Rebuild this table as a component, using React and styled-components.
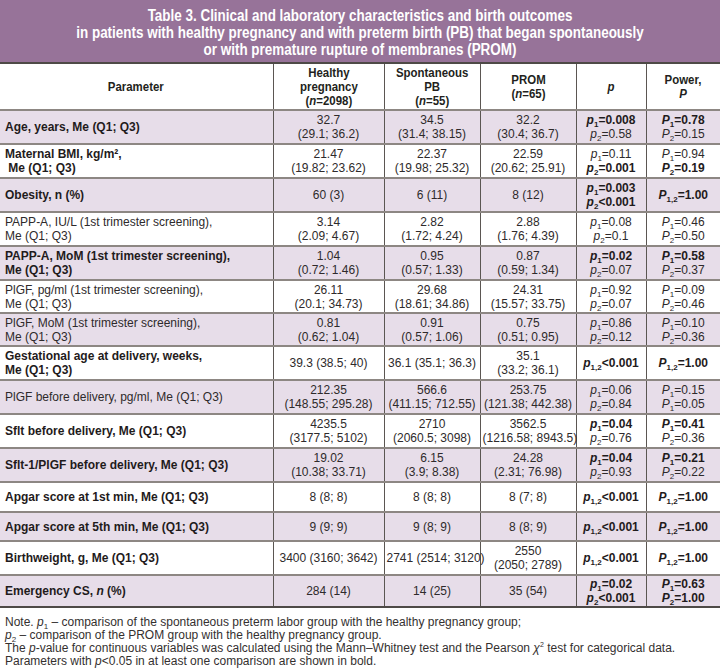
import React from "react";
import styled, { createGlobalStyle } from "styled-components";

const Global = createGlobalStyle`
  html, body { margin: 0; padding: 0; background: #ffffff; }
  body { font-family: "Liberation Sans", Arial, sans-serif; color: #231f20; }
`;

const Page = styled.div`
  width: 720px;
`;

const TitleBar = styled.div`
  background: #977399;
  color: #ffffff;
  font-family: "Liberation Sans", Arial, sans-serif;
  font-weight: bold;
  font-size: 16px;
  line-height: 17px;
  padding: 7px 0 4px;
  border-bottom: 2px solid #4e4a47;
`;

const TitleLine = styled.div`
  text-align: center;
  white-space: nowrap;
  transform: scaleX(0.84);
  transform-origin: center;
`;

const Table = styled.table`
  width: 720px;
  border-collapse: collapse;
  table-layout: fixed;
  border-bottom: 2px solid #4e4a47;
`;

const HeadCell = styled.th`
  font-family: "Liberation Sans", Arial, sans-serif;
  font-weight: bold;
  font-size: 13px;
  line-height: 14px;
  text-align: center;
  vertical-align: middle;
  padding: 0 2px;
  height: 45px;
  color: #231f20;
  border-left: 1px solid #5b5652;
  &:first-child { border-left: none; }
`;

const Narrow = styled.span`
  display: inline-block;
  white-space: nowrap;
  transform: scaleX(0.88);
  transform-origin: center;
`;

const Row = styled.tr`
  background: ${(p) => (p.$shaded ? "#e7dde9" : "#ffffff")};
  border-top: 2px solid #8d8783;
  height: ${(p) => p.$h}px;
`;

const ParamCell = styled.td`
  font-size: 12px;
  line-height: 14px;
  font-weight: ${(p) => (p.$bold ? "bold" : "normal")};
  color: ${(p) => (p.$bold ? "#1f1b1c" : "#2e2a2b")};
  text-align: left;
  vertical-align: middle;
  padding: 0 4px 0 5px;
  white-space: pre;
`;

const Cell = styled.td`
  font-size: 12px;
  line-height: 14px;
  text-align: center;
  vertical-align: middle;
  padding: 0 2px;
  color: #2e2a2b;
  border-left: 1px solid #5b5652;
  white-space: nowrap;
`;

const Line = styled.div`
  font-weight: ${(p) => (p.$bold ? "bold" : "normal")};
  color: ${(p) => (p.$bold ? "#1f1b1c" : "#2e2a2b")};
`;

const Sub = styled.sub`
  font-size: 8px;
  line-height: 0;
  vertical-align: -3px;
`;

const Sup = styled.sup`
  font-size: 7px;
  line-height: 0;
  vertical-align: 5px;
`;

const It = styled.i``;

const Notes = styled.div`
  font-size: 12px;
  line-height: 13px;
  color: #34302f;
  padding: 8px 0 0 5px;
`;

const cols = [273, 111, 96, 96, 70, 74];

const Stat = ({ sym, sub, rest, bold }) => (
  <Line $bold={bold}>
    <It>{sym}</It>
    <Sub>{sub}</Sub>
    {rest}
  </Line>
);

const rows = [
  { param: "Age, years, Me (Q1; Q3)", bold: true, h: ["32.7", "(29.1; 36.2)"], s: ["34.5", "(31.4; 38.15)"], r: ["32.2", "(30.4; 36.7)"],
    p: [["1", "=0.008", true], ["2", "=0.58", false]], P: [["1", "=0.78", true], ["2", "=0.15", false]], height: 34 },
  { param: "Maternal BMI, kg/m²,\n Me (Q1; Q3)", bold: true, h: ["21.47", "(19.82; 23.62)"], s: ["22.37", "(19.98; 25.32)"], r: ["22.59", "(20.62; 25.91)"],
    p: [["1", "=0.11", false], ["2", "=0.001", true]], P: [["1", "=0.94", false], ["2", "=0.19", true]], height: 34 },
  { param: "Obesity, n (%)", bold: true, h: ["60 (3)"], s: ["6 (11)"], r: ["8 (12)"],
    p: [["1", "=0.003", true], ["2", "<0.001", true]], P: [["1,2", "=1.00", true]], height: 34 },
  { param: "PAPP-A, IU/L (1st trimester screening),\nMe (Q1; Q3)", bold: false, h: ["3.14", "(2.09; 4.67)"], s: ["2.82", "(1.72; 4.24)"], r: ["2.88", "(1.76; 4.39)"],
    p: [["1", "=0.08", false], ["2", "=0.1", false]], P: [["1", "=0.46", false], ["2", "=0.50", false]], height: 34 },
  { param: "PAPP-A, MoM (1st trimester screening),\nMe (Q1; Q3)", bold: true, h: ["1.04", "(0.72; 1.46)"], s: ["0.95", "(0.57; 1.33)"], r: ["0.87", "(0.59; 1.34)"],
    p: [["1", "=0.02", true], ["2", "=0.07", false]], P: [["1", "=0.58", true], ["2", "=0.37", false]], height: 34 },
  { param: "PlGF, pg/ml (1st trimester screening),\nMe (Q1; Q3)", bold: false, h: ["26.11", "(20.1; 34.73)"], s: ["29.68", "(18.61; 34.86)"], r: ["24.31", "(15.57; 33.75)"],
    p: [["1", "=0.92", false], ["2", "=0.07", false]], P: [["1", "=0.09", false], ["2", "=0.46", false]], height: 33 },
  { param: "PlGF, MoM (1st trimester screening),\nMe (Q1; Q3)", bold: false, h: ["0.81", "(0.62; 1.04)"], s: ["0.91", "(0.57; 1.06)"], r: ["0.75", "(0.51; 0.95)"],
    p: [["1", "=0.86", false], ["2", "=0.12", false]], P: [["1", "=0.10", false], ["2", "=0.36", false]], height: 33 },
  { param: "Gestational age at delivery, weeks,\nMe (Q1; Q3)", bold: true, h: ["39.3 (38.5; 40)"], s: ["36.1 (35.1; 36.3)"], r: ["35.1", "(33.2; 36.1)"],
    p: [["1,2", "<0.001", true]], P: [["1,2", "=1.00", true]], height: 34 },
  { param: "PlGF before delivery, pg/ml, Me (Q1; Q3)", bold: false, h: ["212.35", "(148.55; 295.28)"], s: ["566.6", "(411.15; 712.55)"], r: ["253.75", "(121.38; 442.38)"],
    p: [["1", "=0.06", false], ["2", "=0.84", false]], P: [["1", "=0.15", false], ["1", "=0.05", false]], height: 34 },
  { param: "Sflt before delivery, Me (Q1; Q3)", bold: true, h: ["4235.5", "(3177.5; 5102)"], s: ["2710", "(2060.5; 3098)"], r: ["3562.5", "(1216.58; 8943.5)"],
    p: [["1", "=0.04", true], ["2", "=0.76", false]], P: [["1", "=0.41", true], ["2", "=0.36", false]], height: 34 },
  { param: "Sflt-1/PlGF before delivery, Me (Q1; Q3)", bold: true, h: ["19.02", "(10.38; 33.71)"], s: ["6.15", "(3.9; 8.38)"], r: ["24.28", "(2.31; 76.98)"],
    p: [["1", "=0.04", true], ["2", "=0.93", false]], P: [["1", "=0.21", true], ["2", "=0.22", false]], height: 34 },
  { param: "Apgar score at 1st min, Me (Q1; Q3)", bold: true, h: ["8 (8; 8)"], s: ["8 (8; 8)"], r: ["8 (7; 8)"],
    p: [["1,2", "<0.001", true]], P: [["1,2", "=1.00", true]], height: 30 },
  { param: "Apgar score at 5th min, Me (Q1; Q3)", bold: true, h: ["9 (9; 9)"], s: ["9 (8; 9)"], r: ["8 (8; 9)"],
    p: [["1,2", "<0.001", true]], P: [["1,2", "=1.00", true]], height: 29 },
  { param: "Birthweight, g, Me (Q1; Q3)", bold: true, h: ["3400 (3160; 3642)"], s: ["2741 (2514; 3120)"], r: ["2550", "(2050; 2789)"],
    p: [["1,2", "<0.001", true]], P: [["1,2", "=1.00", true]], height: 34 },
  { param: "EMERGENCY", bold: true, h: ["284 (14)"], s: ["14 (25)"], r: ["35 (54)"],
    p: [["1", "=0.02", true], ["2", "<0.001", true]], P: [["1", "=0.63", true], ["2", "=1.00", true]], height: 32 },
];

const renderParam = (txt) => {
  if (txt === "EMERGENCY") return <>Emergency CS, <It>n</It> (%)</>;
  return txt;
};

export default function App() {
  return (
    <Page>
      <Global />
      <TitleBar>
        <TitleLine>Table 3. Clinical and laboratory characteristics and birth outcomes</TitleLine>
        <TitleLine>in patients with healthy pregnancy and with preterm birth (PB) that began spontaneously</TitleLine>
        <TitleLine>or with premature rupture of membranes (PROM)</TitleLine>
      </TitleBar>
      <Table>
        <colgroup>
          {cols.map((w, i) => (
            <col key={i} style={{ width: w }} />
          ))}
        </colgroup>
        <thead>
          <tr>
            <HeadCell><Narrow>Parameter</Narrow></HeadCell>
            <HeadCell>
              <Narrow>
                Healthy
                <br />
                pregnancy
                <br />(<It>n</It>=2098)
              </Narrow>
            </HeadCell>
            <HeadCell>
              <Narrow>
                Spontaneous
                <br />
                PB
                <br />(<It>n</It>=55)
              </Narrow>
            </HeadCell>
            <HeadCell>
              <Narrow>
                PROM
                <br />(<It>n</It>=65)
              </Narrow>
            </HeadCell>
            <HeadCell>
              <Narrow><It>p</It></Narrow>
            </HeadCell>
            <HeadCell>
              <Narrow>
                Power,
                <br />
                <It>P</It>
              </Narrow>
            </HeadCell>
          </tr>
        </thead>
        <tbody>
          {rows.map((r, i) => (
            <Row key={i} $shaded={i % 2 === 0} $h={r.height}>
              <ParamCell $bold={r.bold}>{renderParam(r.param)}</ParamCell>
              {[r.h, r.s, r.r].map((v, j) => (
                <Cell key={j}>
                  {v.map((l, k) => (
                    <Line key={k}>{l}</Line>
                  ))}
                </Cell>
              ))}
              <Cell>
                {r.p.map(([sub, rest, b], k) => (
                  <Stat key={k} sym="p" sub={sub} rest={rest} bold={b} />
                ))}
              </Cell>
              <Cell>
                {r.P.map(([sub, rest, b], k) => (
                  <Stat key={k} sym="P" sub={sub} rest={rest} bold={b} />
                ))}
              </Cell>
            </Row>
          ))}
        </tbody>
      </Table>
      <Notes>
        Note. <It>p</It>
        <Sub>1</Sub> – comparison of the spontaneous preterm labor group with the healthy pregnancy group;
        <br />
        <It>p</It>
        <Sub>2</Sub> – comparison of the PROM group with the healthy pregnancy group.
        <br />
        The <It>p</It>-value for continuous variables was calculated using the Mann–Whitney test and the Pearson <It>χ</It>
        <Sup>2</Sup> test for categorical data.
        <br />
        Parameters with <It>p</It>&lt;0.05 in at least one comparison are shown in bold.
      </Notes>
    </Page>
  );
}
